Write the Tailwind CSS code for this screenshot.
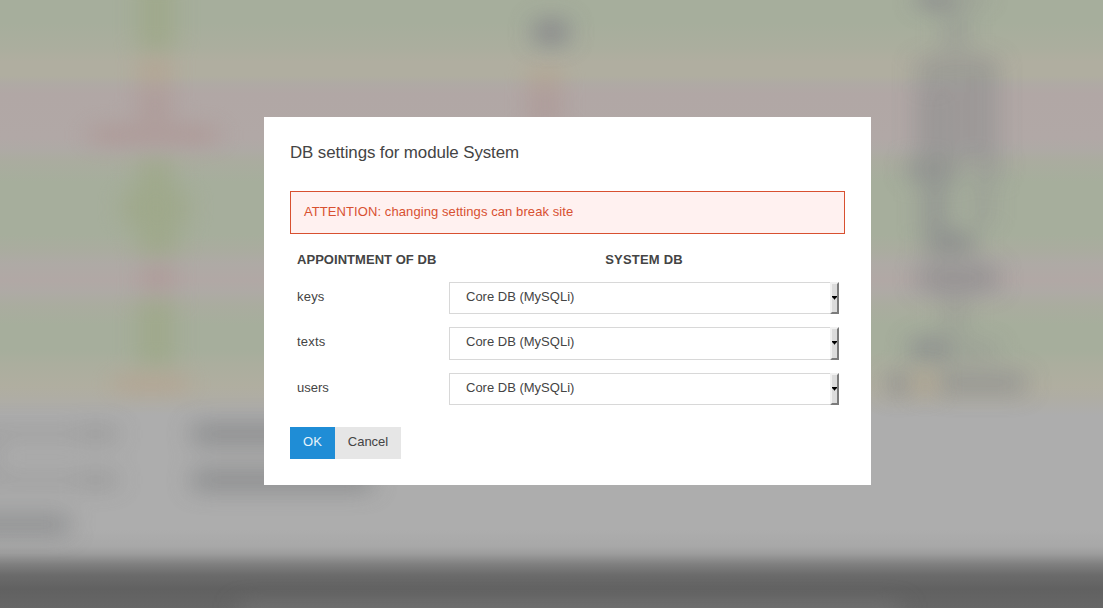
<!DOCTYPE html>
<html lang="en">
<head>
<meta charset="utf-8">
<title>DB settings</title>
<script src="https://cdn.jsdelivr.net/npm/@tailwindcss/browser@4"></script>
</head>
<body class="relative h-[608px] w-[1103px] overflow-hidden font-['Liberation_Sans',Arial,sans-serif] text-[13px] leading-5 text-[#444]">
<!-- Blurred, dimmed page behind the dialog -->
<div class="absolute inset-0 bg-[linear-gradient(180deg,#a6ae9c_0px,#a6ae9c_22px,#abae9e_48px,#b0aea0_62px,#b0aea0_76px,#afaaa4_83px,#b1a7a5_94px,#b1a8a6_138px,#aeaaa5_150px,#aaac9f_162px,#a6ae9c_182px,#a6ae9c_234px,#aaac9f_250px,#aeaaa5_263px,#b1a8a5_280px,#aeaaa5_292px,#aaac9f_305px,#a6ae9c_325px,#a6ae9c_350px,#abae9e_364px,#b0aea0_386px,#afada4_398px,#adadad_416px,#adadad_530px,#a8a8a8_546px,#9c9c9c_554px,#808080_564px,#6b6b6b_575px,#616161_589px,#666_608px)]">
<svg class="block h-full w-full" viewBox="0 0 1103 608">
<defs>
<filter id="b" filterUnits="userSpaceOnUse" x="-60" y="-60" width="1220" height="730" color-interpolation-filters="sRGB"><feGaussianBlur stdDeviation="13 10"/></filter>
<filter id="c" filterUnits="userSpaceOnUse" x="-60" y="-60" width="1220" height="730" color-interpolation-filters="sRGB"><feGaussianBlur stdDeviation="12 10"/></filter>
</defs>
<g filter="url(#b)" opacity=".75">
<path fill="#9da786" d="M138-20h37v70h-37zM138 160h35v30h15v35h-10v30h-40v-30h-15v-35h15zM138 300h36v65h-36z"/>
<path fill="#b5a28f" d="M140 58h30v26h-30zM115 375h72v17h-72zM530 68h30v18h-30z"/>
<path fill="#ae9896" d="M140 88h30v34h-30zM90 124h128v22H90zM142 264h32v28h-32zM530 88h30v38h-30z"/>
</g>
<g filter="url(#c)" fill="#8b8c8d" opacity=".9">
<rect x="534" y="17" width="34" height="30"/>
<rect x="918" y="-10" width="34" height="20"/>
<rect x="950" y="-10" width="36" height="17" opacity=".4"/>
<rect x="943" y="12" width="25" height="40" opacity=".45"/>
<rect x="916" y="55" width="82" height="104" opacity=".55"/>
<rect x="918" y="92" width="26" height="64" opacity=".2"/>
<rect x="976" y="60" width="20" height="90" opacity=".15"/>
<rect x="908" y="158" width="50" height="24" opacity=".8"/>
<rect x="974" y="156" width="27" height="26" opacity=".45"/>
<rect x="922" y="182" width="26" height="50" opacity=".75"/>
<rect x="974" y="182" width="18" height="45" opacity=".45"/>
<rect x="925" y="230" width="50" height="26" opacity=".85"/>
<rect x="918" y="262" width="80" height="32" opacity=".7"/>
<rect x="943" y="292" width="24" height="40" opacity=".4"/>
<rect x="910" y="335" width="42" height="27" opacity=".8"/>
<rect x="956" y="338" width="42" height="24" opacity=".35"/>
<rect x="886" y="371" width="26" height="26" opacity=".7"/>
<rect x="936" y="369" width="90" height="28" opacity=".6"/>
<rect x="-40" y="422" width="160" height="24" opacity=".27"/>
<rect x="82" y="422" width="32" height="24" opacity=".22"/>
<rect x="-40" y="468" width="160" height="24" opacity=".27"/>
<rect x="82" y="468" width="32" height="24" opacity=".22"/>
<rect x="-30" y="440" width="30" height="32" opacity=".3"/>
<rect x="192" y="420" width="140" height="28" opacity=".78"/>
<rect x="192" y="466" width="180" height="28" opacity=".78"/>
<rect x="-40" y="511" width="110" height="27" opacity=".72"/>
</g>
<g filter="url(#c)"><rect x="240" y="602" width="660" height="40" fill="#787878" opacity=".6"/><rect x="916" y="370" width="18" height="25" fill="#b8a184" opacity=".5"/></g>
</svg>
</div>
<!-- Dialog -->
<main class="relative ml-[264px] mt-[117px] h-[368px] w-[607px] bg-white px-[26px] pt-[25px]">
<h1 class="h-[49px] text-[16.9px] leading-[21px] tracking-[-0.1px]">DB settings for module System</h1>
<div class="h-[43px] border border-[#d85030] bg-[#fff1f0] px-[13px] pt-[10px] tracking-[0.085px] text-[#d85030]">ATTENTION: changing settings can break site</div>
<div class="grid grid-cols-[159px_390px] pt-4 font-bold tracking-[0.04px]">
<div class="pl-[7px]">APPOINTMENT OF DB</div><div class="text-center tracking-[0.2px]">SYSTEM DB</div>
</div>
<div class="flex flex-col gap-[13px] pt-3">
<div class="grid h-8 grid-cols-[159px_390px]">
<div class="pl-[7px] pt-[5px] tracking-[0.2px]">keys</div>
<div class="flex justify-between border border-r-0 border-[#d8d8d8]"><span class="pl-4 pt-1">Core DB (MySQLi)</span><span class="-my-px w-[9px] border-2 border-b-[#7b7b7b] border-l-[#f1f1f1] border-r-[#7b7b7b] border-t-[#f1f1f1] bg-[#dcdcdc] pt-3"><svg class="block" width="5" height="4"><path d="M0 0h5v1L3 3v.5H2V3L0 1z"/></svg></span></div>
</div>
<div class="grid h-[33px] grid-cols-[159px_390px]">
<div class="pl-[7px] pt-[5px] tracking-[0.2px]">texts</div>
<div class="flex justify-between border border-r-0 border-[#d8d8d8]"><span class="pl-4 pt-1">Core DB (MySQLi)</span><span class="-my-px w-[9px] border-2 border-b-[#7b7b7b] border-l-[#f1f1f1] border-r-[#7b7b7b] border-t-[#f1f1f1] bg-[#dcdcdc] pt-3"><svg class="block" width="5" height="4"><path d="M0 0h5v1L3 3v.5H2V3L0 1z"/></svg></span></div>
</div>
<div class="grid h-8 grid-cols-[159px_390px]">
<div class="pl-[7px] pt-[5px]">users</div>
<div class="flex justify-between border border-r-0 border-[#d8d8d8]"><span class="pl-4 pt-1">Core DB (MySQLi)</span><span class="-my-px w-[9px] border-2 border-b-[#7b7b7b] border-l-[#f1f1f1] border-r-[#7b7b7b] border-t-[#f1f1f1] bg-[#dcdcdc] pt-3"><svg class="block" width="5" height="4"><path d="M0 0h5v1L3 3v.5H2V3L0 1z"/></svg></span></div>
</div>
</div>
<div class="flex pt-[22px]">
<button class="h-8 w-[45px] bg-[#1f8dd6] pb-[3px] text-[#e8f4fb]">OK</button>
<button class="h-8 w-[66px] bg-[#e6e6e6] pb-[3px]">Cancel</button>
</div>
</main>
</body>
</html>
